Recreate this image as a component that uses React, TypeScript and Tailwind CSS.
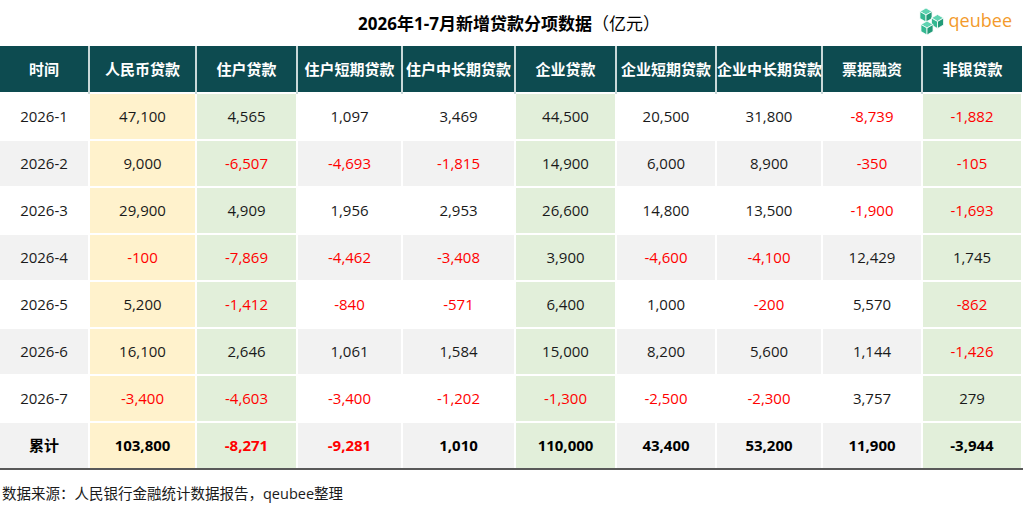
import React from "react";

const FONT = { fontFamily: '"Open Sans", "Noto Sans CJK SC", sans-serif' };

const COLUMNS = [
    { label: "时间", width: 89, tone: "" },
    { label: "人民币贷款", width: 107, tone: "yellow" },
    { label: "住户贷款", width: 101, tone: "green" },
    { label: "住户短期贷款", width: 105, tone: "" },
    { label: "住户中长期贷款", width: 113, tone: "" },
    { label: "企业贷款", width: 101, tone: "green" },
    { label: "企业短期贷款", width: 100, tone: "" },
    { label: "企业中长期贷款", width: 106, tone: "" },
    { label: "票据融资", width: 100, tone: "" },
    { label: "非银贷款", width: 100, tone: "green" },
];

const ROWS: string[][] = [
    ["2026-1", "47,100", "4,565", "1,097", "3,469", "44,500", "20,500", "31,800", "-8,739", "-1,882"],
    ["2026-2", "9,000", "-6,507", "-4,693", "-1,815", "14,900", "6,000", "8,900", "-350", "-105"],
    ["2026-3", "29,900", "4,909", "1,956", "2,953", "26,600", "14,800", "13,500", "-1,900", "-1,693"],
    ["2026-4", "-100", "-7,869", "-4,462", "-3,408", "3,900", "-4,600", "-4,100", "12,429", "1,745"],
    ["2026-5", "5,200", "-1,412", "-840", "-571", "6,400", "1,000", "-200", "5,570", "-862"],
    ["2026-6", "16,100", "2,646", "1,061", "1,584", "15,000", "8,200", "5,600", "1,144", "-1,426"],
    ["2026-7", "-3,400", "-4,603", "-3,400", "-1,202", "-1,300", "-2,500", "-2,300", "3,757", "279"],
];

// total row: the last one stays black in the source
const TOTAL = [
    { v: "累计", red: false },
    { v: "103,800", red: false },
    { v: "-8,271", red: true },
    { v: "-9,281", red: true },
    { v: "1,010", red: false },
    { v: "110,000", red: false },
    { v: "43,400", red: false },
    { v: "53,200", red: false },
    { v: "11,900", red: false },
    { v: "-3,944", red: false },
];

function cellBg(tone: string, striped: boolean) {
    if (tone === "yellow") return "bg-[#fff2cc]";
    if (tone === "green") return "bg-[#e2efda]";
    return striped ? "bg-[#f2f2f2]" : "bg-white";
}

function Cube({ cx, cy, r }: { cx: number; cy: number; r: number }) {
    const w = r * 0.866;
    const top = `${cx},${cy - r}`;
    const ur = `${cx + w},${cy - r / 2}`;
    const lr = `${cx + w},${cy + r / 2}`;
    const bot = `${cx},${cy + r}`;
    const ll = `${cx - w},${cy + r / 2}`;
    const ul = `${cx - w},${cy - r / 2}`;
    const c = `${cx},${cy}`;
    return (
        <g stroke="#ffffff" strokeWidth="0.8" strokeLinejoin="round">
            <polygon points={`${top} ${ur} ${c} ${ul}`} fill="#5fd3b1" />
            <polygon points={`${ul} ${c} ${bot} ${ll}`} fill="#34b891" />
            <polygon points={`${c} ${ur} ${lr} ${bot}`} fill="#229b78" />
        </g>
    );
}

function Logo() {
    return (
        <div className="flex items-center gap-[3px]">
            <svg width="30" height="30" viewBox="0 0 30 30">
                <Cube cx={10} cy={9} r={7} />
                <Cube cx={21.5} cy={15.5} r={7} />
                <Cube cx={11} cy={22} r={7} />
            </svg>
            <span className="text-[18px] leading-none text-[#f39a2b] pb-[3px]" style={FONT}>
                qeubee
            </span>
        </div>
    );
}

export default function App() {
    return (
        <div className="w-[1024px] h-[518px] bg-white text-[#1a1a1a]" style={FONT}>
            {/* Title bar */}
            <div className="grid grid-cols-[1fr_auto_1fr] items-center h-[46px]">
                <div />
                <h1 className="text-[17px] font-bold text-black leading-none pr-[6px]">
                    2026年1-7月新增贷款分项数据<span className="font-normal">（亿元）</span>
                </h1>
                <div className="flex justify-end pr-[12px] pb-[4px]">
                    <Logo />
                </div>
            </div>

            {/* Table */}
            <table className="border-collapse table-fixed w-[1022px] text-[15px]">
                <colgroup>
                    {COLUMNS.map((c) => (
                        <col key={c.label} style={{ width: c.width }} />
                    ))}
                </colgroup>
                <thead>
                    <tr className="h-[47px] bg-[#0d4b50]">
                        {COLUMNS.map((c, i) => (
                            <th
                                key={c.label}
                                className={`text-white font-bold text-[15px] whitespace-nowrap p-0 border-y-0 ${i === 0 ? "border-l-0" : "border-l-[2px] border-l-[#c9d8d8]"}`}
                            >
                                {c.label}
                            </th>
                        ))}
                    </tr>
                </thead>
                <tbody>
                    {ROWS.map((row, ri) => (
                        <tr key={row[0]} className="h-[47px]">
                            {row.map((v, ci) => (
                                <td
                                    key={ci}
                                    className={`text-center p-0 border-[2px] border-white ${ci === 0 ? "border-l-0" : ""} ${cellBg(COLUMNS[ci].tone, ri % 2 === 1)} ${v.startsWith("-") ? "text-[#ff0000]" : "text-[#1a1a1a]"}`}
                                >
                                    {v}
                                </td>
                            ))}
                        </tr>
                    ))}
                    <tr className="h-[47px] border-b-[2px] border-b-[#595959]">
                        {TOTAL.map((c, ci) => (
                            <td
                                key={ci}
                                className={`text-center p-0 font-bold border-[2px] border-white border-b-[#595959] ${ci === 0 ? "border-l-0" : ""} ${cellBg(COLUMNS[ci].tone, true)} ${c.red ? "text-[#ff0000]" : "text-black"}`}
                            >
                                {c.v}
                            </td>
                        ))}
                    </tr>
                </tbody>
            </table>

            {/* Source note */}
            <p className="mt-[14px] pl-[2px] text-[14.5px] leading-[20px] text-[#1a1a1a]">
                数据来源：人民银行金融统计数据报告，qeubee整理
            </p>
        </div>
    );
}
